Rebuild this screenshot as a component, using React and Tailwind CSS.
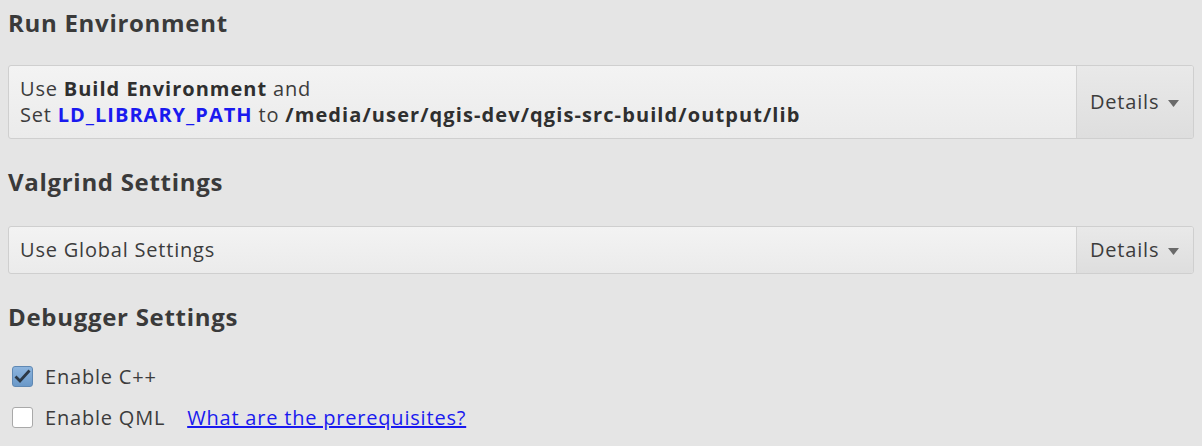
import React from 'react';

const font = { fontFamily: '"Open Sans", "Noto Sans", sans-serif' };

const DetailsButton = () => (
  <div className="flex w-[117px] shrink-0 items-center gap-[9px] self-stretch border-l border-[#d2d2d2] bg-gradient-to-b from-[#e9e9e9] to-[#dedede] pl-[13px] text-[#3c3c3c]">
    <span>Details</span>
    <svg width="11" height="7" viewBox="0 0 11 7" className="mt-[2px]">
      <path d="M0 0 L11 0 L5.5 7 Z" fill="#6a6a6a" />
    </svg>
  </div>
);

const DetailsBox = ({ children, h }) => (
  <div className={`mx-[8px] flex ${h} overflow-hidden rounded-[3px] border border-[#cfcfcf] bg-gradient-to-b from-[#f3f3f3] to-[#ebebeb] text-[20px] tracking-[0.8px]`}>
    <div className="flex flex-1 flex-col justify-center pl-[11px] leading-[26px] text-[#3c3c3c]">
      {children}
    </div>
    <DetailsButton />
  </div>
);

const Heading = ({ children, className = '' }) => (
  <h2 className={`pl-[8px] text-[24px] font-bold tracking-[0.7px] text-[#3a3a3a] ${className}`}>{children}</h2>
);

const Check = ({ checked }) =>
  checked ? (
    <span className="flex h-[21px] w-[21px] items-center justify-center rounded-[3px] border border-[#5f88b3] bg-gradient-to-b from-[#8db5de] to-[#6a98c8]">
      <svg width="17" height="15" viewBox="0 0 17 15">
        <path d="M1.5 7.5 L6 12 L15.5 1.5" stroke="#2c3845" strokeWidth="2.8" fill="none" />
      </svg>
    </span>
  ) : (
    <span className="h-[21px] w-[21px] rounded-[3px] border border-[#a9a9a9] bg-white" />
  );

export default function App() {
  return (
    <div className="h-[446px] w-[1202px] overflow-hidden bg-[#e5e5e5]" style={font}>
      <Heading className="pt-[5px] leading-[36px]">Run Environment</Heading>
      <div className="mt-[24px]">
        <DetailsBox h="h-[74px]">
          <div>
            Use <b className="tracking-[1px] text-[#2f2f2f]">Build Environment</b> and
          </div>
          <div>
            Set <b className="tracking-[1px] text-[#1a1aef]">LD_LIBRARY_PATH</b> to{' '}
            <b className="tracking-[1.1px] text-[#2f2f2f]">/media/user/qgis-dev/qgis-src-build/output/lib</b>
          </div>
        </DetailsBox>
      </div>
      <Heading className="mt-[25px] leading-[36px]">Valgrind Settings</Heading>
      <div className="mt-[26px]">
        <DetailsBox h="h-[48px]">
          <div>Use Global Settings</div>
        </DetailsBox>
      </div>
      <Heading className="mt-[25px] leading-[36px]">Debugger Settings</Heading>
      <div className="mt-[31px] flex flex-col gap-[20px] pl-[12px] text-[20px] tracking-[0.8px] text-[#3c3c3c]">
        <label className="flex h-[21px] items-center gap-[12px]">
          <Check checked />
          <span>Enable C++</span>
        </label>
        <label className="flex h-[21px] items-center gap-[12px]">
          <Check />
          <span>Enable QML</span>
          <a className="ml-[10px] text-[#1a1aef] underline" href="#">
            What are the prerequisites?
          </a>
        </label>
      </div>
    </div>
  );
}
